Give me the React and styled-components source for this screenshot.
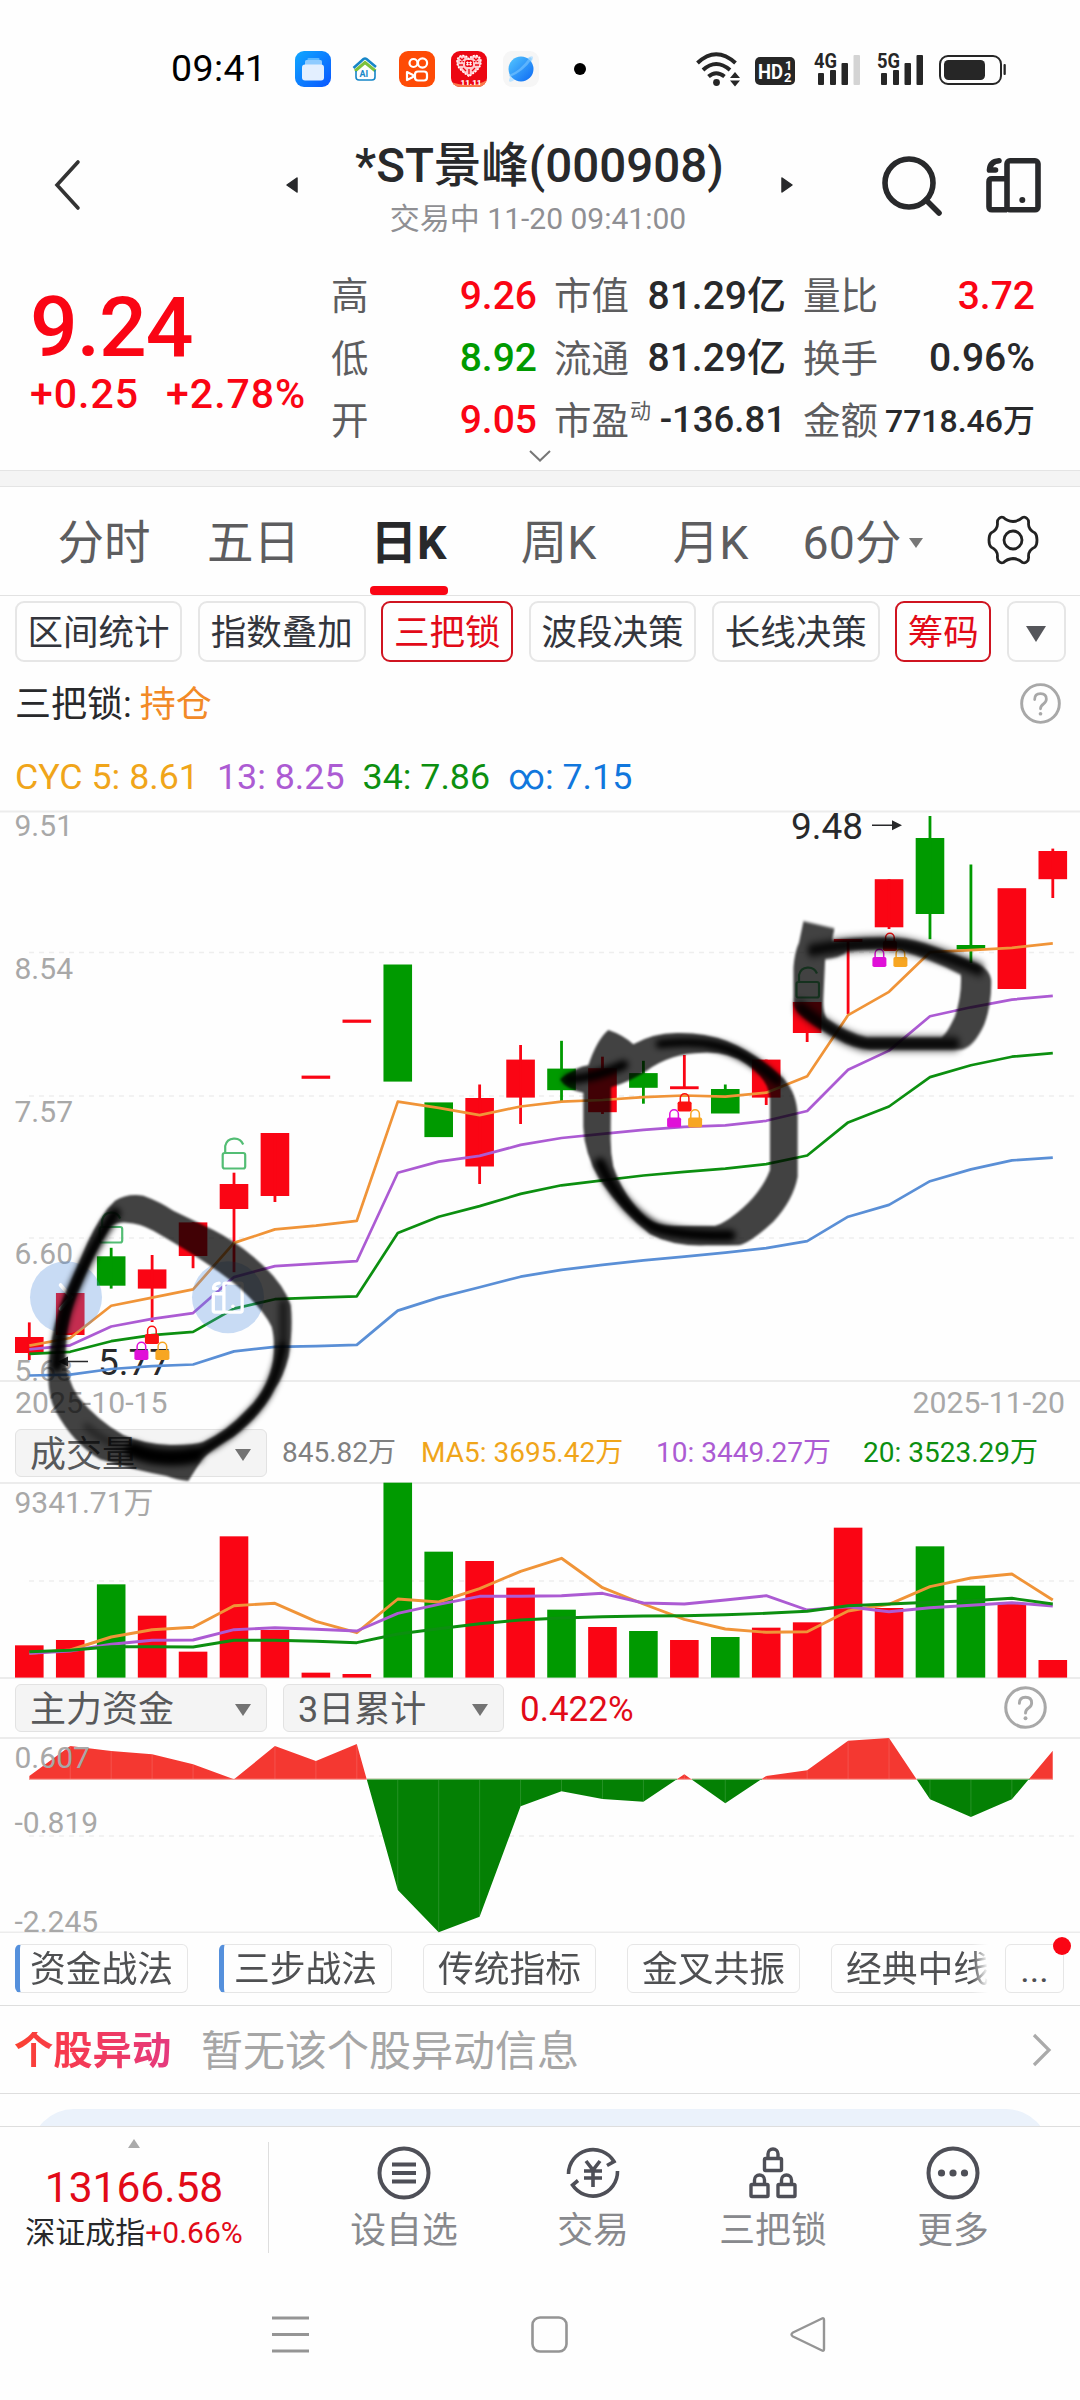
import React from "react";
import styled, { createGlobalStyle, css } from "styled-components";

const RED = "#fa0514";
const GREEN = "#009a00";

const GlobalStyle = createGlobalStyle`
  html, body { margin: 0; padding: 0; background: #fff; }
  * { box-sizing: border-box; }
`;

const Screen = styled.div`
  position: relative;
  width: 1080px;
  height: 2400px;
  overflow: hidden;
  display: flex;
  flex-direction: column;
  background: #fefefe;
  color: #28292b;
  font-family: Roboto, "Noto Sans CJK SC", sans-serif;
  font-size: 36px;
  line-height: 1;
  white-space: nowrap;
`;

/* ---------- status bar ---------- */
const StatusBar = styled.div`
  height: 138px;
  display: flex;
  align-items: center;
  padding: 0 74px 0 171px;
`;
const Clock = styled.div`
  width: 124px;
  font-size: 37.5px;
  letter-spacing: 0.4px;
  color: #000;
`;
const AppIcons = styled.div`
  display: flex;
  gap: 16px;
  align-items: center;
`;
const Dot = styled.div`
  width: 12px;
  height: 12px;
  border-radius: 6px;
  background: #000;
  margin-left: 19px;
`;
const Signals = styled.div`
  display: flex;
  align-items: center;
  margin-left: auto;
`;

/* ---------- header ---------- */
const Header = styled.header`
  height: 112px;
  display: flex;
  align-items: center;
  padding: 0 38px 18px 50px;
`;
const Titles = styled.div`
  display: flex;
  flex-direction: column;
  align-items: center;
  width: 481px;
  padding-top: 11px;
`;
const Title = styled.h1`
  margin: 0;
  font-size: 47.5px;
  font-weight: 500;
  line-height: 56px;
`;
const Subtitle = styled.div`
  font-size: 30px;
  color: #8f8f93;
  line-height: 50px;
  padding-right: 3px;
`;
const Spacer = styled.div`
  width: ${(p) => p.$w}px;
  flex: none;
`;

/* ---------- quote ---------- */
const Quote = styled.section`
  height: 220px;
  display: flex;
  padding: 16px 44px 0 30px;
`;
const PriceBlock = styled.div`
  width: 301px;
  color: ${RED};
  font-weight: 500;
`;
const Price = styled.div`
  font-size: 84px;
  line-height: 88px;
  padding-top: 18px;
  letter-spacing: -1px;
`;
const Change = styled.div`
  display: flex;
  gap: 27px;
  font-size: 41px;
  line-height: 44px;
  letter-spacing: 1px;
`;
const Stats = styled.div`
  display: grid;
  grid-template-columns: 206px 17px 232px 17px 232px;
  grid-template-rows: repeat(3, 62.3px);
`;
const Stat = styled.div`
  display: flex;
  align-items: center;
  justify-content: space-between;
  grid-column: ${(p) => p.$col};
`;
const StatLabel = styled.span`
  font-size: 37.5px;
  color: #5d5d5f;
  display: flex;
`;
const Sup = styled.span`
  font-size: 21px;
  line-height: 16px;
  margin-left: 1px;
`;
const StatValue = styled.span`
  font-size: ${(p) => p.$size || 39}px;
  font-weight: 500;
  padding-bottom: 2px;
  color: ${(p) => p.$color || "#28292b"};
`;
const ExpandRow = styled.div`
  height: 0;
  display: flex;
  justify-content: center;
  align-items: flex-end;
  svg { margin-bottom: 7px; }
`;
const Band = styled.div`
  height: 17px;
  background: #f4f4f4;
  border-top: 1px solid #e4e4e4;
  border-bottom: 1px solid #e4e4e4;
`;

/* ---------- tabs ---------- */
const Tabs = styled.nav`
  height: 109px;
  padding: 0 24px 0 28px;
  display: grid;
  grid-template-columns: 152px 147px 163px 137px 167px 138px 1fr;
  border-bottom: 1px solid #e2e2e2;
`;
const Tab = styled.div`
  display: flex;
  flex-direction: column;
  align-items: center;
  justify-content: space-between;
  font-size: 46.5px;
  font-weight: ${(p) => (p.$active ? 700 : 400)};
  color: ${(p) => (p.$active ? "#28292b" : "#5d5d5f")};
`;
const TabLabel = styled.div`
  display: flex;
  align-items: center;
  gap: 8px;
  height: 98px;
  padding-top: 14px;
`;
const TabMark = styled.div`
  width: 78px;
  height: 9px;
  border-radius: 4px;
  background: ${(p) => (p.$active ? RED : "transparent")};
`;
const Caret = styled.i`
  width: 0;
  height: 0;
  border-left: ${(p) => p.$w / 2}px solid transparent;
  border-right: ${(p) => p.$w / 2}px solid transparent;
  border-top: ${(p) => p.$h}px solid ${(p) => p.$color};
`;
const GearSlot = styled.div`
  display: flex;
  padding: 28px 0 0 55px;
`;

/* ---------- tool chips ---------- */
const ToolRow = styled.div`
  height: 66px;
  display: flex;
  align-items: flex-end;
  gap: 15.4px;
  padding: 0 14.5px;
`;
const ToolChip = styled.div`
  height: 61px;
  width: ${(p) => p.$w}px;
  display: flex;
  align-items: center;
  justify-content: center;
  padding-top: 4px;
  border-radius: 9px;
  border: ${(p) => (p.$on ? `2px solid #cf1420` : "2px solid #e6e6e6")};
  color: ${(p) => (p.$on ? "#e20a18" : "#33353c")};
  font-size: 35.5px;
`;
const InfoRow = styled.div`
  height: 84px;
  display: flex;
  align-items: center;
  padding: 2px 19px 0 15px;
  font-size: 36px;
`;
const Hold = styled.span`
  color: #f28a27;
  margin-left: 8px;
`;
const Legend = styled.div`
  height: 64px;
  display: flex;
  align-items: center;
  padding: 0 0 1px 15px;
  gap: ${(p) => p.$gap}px;
  font-size: 35.8px;
`;
const Tint = styled.span`
  color: ${(p) => p.$color};
`;
const Push = styled.div`
  margin-left: auto;
  margin-top: ${(p) => p.$up || 0}px;
  display: flex;
`;

/* ---------- charts ---------- */
const Chart = styled.svg`
  display: block;
  flex: none;
  width: 1080px;
  height: ${(p) => p.$h}px;
  font-family: Roboto, "Noto Sans CJK SC", sans-serif;
`;
const Dates = styled.div`
  height: 46px;
  display: flex;
  justify-content: space-between;
  align-items: center;
  padding: 0 15px 3px 15px;
  font-size: 30.2px;
  color: #a8a8a8;
`;
const PanelBar = styled.div`
  height: ${(p) => p.$h}px;
  display: flex;
  align-items: flex-start;
  padding: ${(p) => p.$top}px 33px 0 15px;
`;
const Select = styled.div`
  width: ${(p) => p.$w}px;
  height: 48px;
  margin-right: 16px;
  padding: 4px 15px 0 14px;
  display: flex;
  align-items: center;
  justify-content: space-between;
  background: #f4f4f4;
  border: 1px solid #e2e2e2;
  border-radius: 6px;
  font-size: 36px;
  color: #58595b;
`;
const Figures = styled.div`
  height: 48px;
  display: flex;
  align-items: center;
  margin-left: -1px;
  font-size: 28px;
  color: #808080;
`;
const Figure = styled.span`
  color: ${(p) => p.$color};
  width: ${(p) => p.$w}px;
`;
const FundValue = styled.div`
  height: 52px;
  line-height: 52px;
  font-size: 35px;
  color: #e20a18;
`;

/* ---------- strategy chips ---------- */
const StrategyRow = styled.div`
  height: 73px;
  display: flex;
  align-items: flex-start;
  padding: 11px 15px 0;
  border-bottom: 1px solid #dedede;
`;
const StrategyList = styled.div`
  display: flex;
  gap: 31px;
  width: 975px;
  margin-right: 15px;
  overflow: hidden;
  -webkit-mask-image: linear-gradient(90deg, #000 957px, transparent 973px);
  mask-image: linear-gradient(90deg, #000 957px, transparent 973px);
`;
const Strategy = styled.div`
  flex: none;
  width: ${(p) => p.$w || 173}px;
  height: 49px;
  display: flex;
  align-items: center;
  justify-content: center;
  padding-top: 5px;
  border: 1.5px solid #e6e6e6;
  border-radius: 6px;
  color: #4f5052;
  font-size: 35.8px;
  ${(p) => p.$mark && css`border-left: 5px solid #5590dc; padding-right: 4px;`}
`;
const More = styled(Strategy)`
  position: relative;
  &::after {
    content: "";
    position: absolute;
    right: -8px;
    top: -8px;
    width: 18px;
    height: 18px;
    border-radius: 9px;
    background: ${RED};
  }
`;

/* ---------- alerts ---------- */
const AlertRow = styled.div`
  height: 88px;
  display: flex;
  align-items: center;
  padding: 5px 27px 0 14px;
  border-bottom: 1px solid #dedede;
`;
const AlertTitle = styled.div`
  font-size: 39.3px;
  font-weight: 700;
  width: 187px;
  background: linear-gradient(90deg, #fb4230 0, #f73a4e 50px, #e53a7e 155px);
  -webkit-background-clip: text;
  background-clip: text;
  color: transparent;
`;
const AlertText = styled.div`
  font-size: 42px;
  color: #a6a6a6;
`;
const CardPeek = styled.div`
  height: 33px;
  padding: 15px 31px 0;
  overflow: hidden;
  border-bottom: 1px solid #dedede;
`;
const Card = styled.div`
  height: 90px;
  border-radius: 43px;
  background: #ebf2fb;
`;

/* ---------- bottom bar ---------- */
const BottomBar = styled.div`
  height: 148px;
  display: flex;
  align-items: flex-start;
`;
const IndexBox = styled.div`
  width: 269px;
  height: 111px;
  margin-top: 15px;
  border-right: 1px solid #dedede;
  display: flex;
  flex-direction: column;
  align-items: center;
`;
const UpMark = styled.i`
  width: 0;
  height: 0;
  margin-top: -3px;
  border-left: 6px solid transparent;
  border-right: 6px solid transparent;
  border-bottom: 9px solid #aaa;
`;
const IndexValue = styled.div`
  font-size: 42.5px;
  line-height: 50px;
  margin-top: 15px;
  color: #e20a18;
`;
const IndexName = styled.div`
  font-size: 30px;
  line-height: 40px;
`;
const Actions = styled.div`
  display: grid;
  grid-template-columns: 189px 180px 180px 180px;
  margin-left: 45px;
  padding-top: 19px;
`;
const Action = styled.div`
  display: flex;
  flex-direction: column;
  align-items: center;
  width: 180px;
  font-size: 35.8px;
  color: #88898d;
  gap: 14px;
`;
const SystemNav = styled.div`
  height: 124px;
  display: flex;
  gap: 222px;
  padding: 41px 0 0 272px;
`;

const Overlay = styled.svg`
  position: absolute;
  left: 0;
  top: 0;
  pointer-events: none;
`;

/* ---------- icons ---------- */
const FolderIcon = () => (
  <svg width="36" height="36" viewBox="0 0 36 36">
    <defs>
      <linearGradient id="fold" x1="0" y1="0" x2="1" y2="1">
        <stop offset="0" stopColor="#10a8ff" /><stop offset="1" stopColor="#0a56ff" />
      </linearGradient>
    </defs>
    <rect width="36" height="36" rx="9" fill="url(#fold)" />
    <rect x="12.5" y="7" width="12" height="5" rx="1" fill="#5cb8ff" />
    <rect x="10" y="9" width="17" height="6" rx="1.5" fill="#8fcbff" />
    <rect x="7" y="13.5" width="22" height="16" rx="3" fill="#e3efff" />
  </svg>
);
const HouseIcon = () => (
  <svg width="36" height="36" viewBox="0 0 36 36">
    <path d="M6.5 17 L16.5 8 Q18 7 19.5 8 L29 16" fill="none" stroke="#1686c8" strokeWidth="2.6" />
    <path d="M8 20 L18 11.5 L28.5 20" fill="none" stroke="#7cc13b" strokeWidth="3" />
    <path d="M9 20 V26 Q9 29 12 29 H25 Q28 29 28 26 V19" fill="none" stroke="#1686c8" strokeWidth="1.6" />
    <text x="12.5" y="25.5" fontSize="9" fontWeight="700" fill="#1686c8" fontFamily="Roboto, sans-serif">AI</text>
  </svg>
);
const VideoIcon = () => (
  <svg width="36" height="36" viewBox="0 0 36 36" fill="none" stroke="#fff" strokeWidth="2.2">
    <rect width="36" height="36" rx="9" fill="#fe4b06" stroke="none" />
    <circle cx="14.5" cy="12" r="4" />
    <circle cx="23.5" cy="12" r="4.6" />
    <rect x="16" y="20.500" width="12" height="9" rx="3" />
    <path d="M8 21 L14 24 V26 L8 29 Z" strokeLinejoin="round" />
  </svg>
);
const HeartIcon = () => (
  <svg width="36" height="36" viewBox="0 0 36 36">
    <defs><clipPath id="heartTile"><rect width="36" height="36" rx="9" /></clipPath></defs>
    <g clipPath="url(#heartTile)">
      <rect width="36" height="36" fill="#ec0713" />
      <path d="M0 31 Q8 34 18 34 Q28 34 36 29 V36 H0Z" fill="#fb7a4c" />
      <path d="M18 25.500 C10 20 5.500 16 6 10 C6.500 3.500 15 2.500 18 8 C21 2.500 29.500 3.500 30 10 C30.500 16 26 20 18 25.500Z" fill="#ffc9cd" stroke="#fff" strokeWidth="1.400" strokeDasharray="2 1.200" />
      <path d="M9 7l4 4m0-4l-4 4M23 7l4 4m0-4l-4 4M12 17l3 3m6 0l3-3M8 14h4M24 14h4M18 18v5" stroke="#ec0713" strokeWidth="1.300" />
      <rect x="14" y="9" width="8" height="7" rx="2" fill="#ec0713" />
      <path d="M16.500 10.500v4M19.500 10.500v4M15 11.700h6M15 13.700h6" stroke="#fff" strokeWidth=".9" />
      <text x="9.500" y="34" fontSize="8" fontWeight="900" fill="#fff" fontFamily="Roboto, sans-serif">11.11</text>
    </g>
  </svg>
);
const PlanetIcon = () => (
  <svg width="36" height="36" viewBox="0 0 36 36">
    <defs>
      <linearGradient id="plan" x1="0" y1="0" x2="1" y2="1">
        <stop offset="0" stopColor="#55c8ff" /><stop offset="1" stopColor="#0b68f4" />
      </linearGradient>
    </defs>
    <rect width="36" height="36" rx="9" fill="#f6f6f6" />
    <ellipse cx="18" cy="18" rx="17" ry="4" transform="rotate(-47 18 18)" fill="#bfe4ff" />
    <circle cx="18" cy="18" r="12.500" fill="url(#plan)" />
    <path d="M7 26 Q21 20 29 8 L27 6 Q17 20 6 24Z" fill="#7cc6ff" opacity=".6" />
  </svg>
);
const SignalCluster = () => (
  <svg width="312" height="36" viewBox="694 50 312 36" fontFamily="Roboto, sans-serif" fontWeight="700">
    <g fill="none" stroke="#262626" strokeWidth="4">
      <path d="M697.500 62 Q716 44.500 735.500 62" />
      <path d="M703 69 Q716 57 730 69" />
      <path d="M708.500 75.500 Q716 69 724.500 75.500" />
    </g>
    <circle cx="716.500" cy="81.500" r="3.400" fill="#262626" />
    <path d="M735 71l5 6h-10zM735 85.500l5-6h-10z" fill="#262626" />
    <rect x="755" y="56" width="40" height="28" rx="5" fill="#262626" />
    <text x="758" y="77.500" fontSize="21" fill="#fff" textLength="25" lengthAdjust="spacingAndGlyphs">HD</text>
    <text x="785" y="69" fontSize="12.500" fill="#fff">1</text>
    <text x="784" y="81" fontSize="13" fill="#fff">2</text>
    {[[814, "4G", true], [877, "5G", false]].map(([x, t, weak]) => (
      <g key={t} fill="#262626">
        <text x={x} y="67" fontSize="20" textLength="23" lengthAdjust="spacingAndGlyphs">{t}</text>
        <rect x={x + 4} y="72" width="6" height="12" rx="1" />
        <rect x={x + 16} y="69" width="6" height="15" rx="1" />
        <rect x={x + 27.500} y="62" width="6.500" height="22" rx="1" />
        <rect x={x + 39.500} y="54" width="6.500" height="30" rx="1" fill={weak ? "#d4d4d4" : "#262626"} />
      </g>
    ))}
    <rect x="940" y="55" width="61" height="28" rx="8" fill="none" stroke="#262626" strokeWidth="2" />
    <rect x="944" y="59" width="41" height="20" rx="4.500" fill="#262626" />
    <rect x="1003.500" y="63" width="2.300" height="11" rx="1" fill="#262626" />
  </svg>
);
const BackIcon = () => (
  <svg width="36" height="54" viewBox="0 0 36 54">
    <path d="M28 4 L7 27 L28 50" fill="none" stroke="#333" strokeWidth="3.600" strokeLinecap="round" />
  </svg>
);
const SideTriangle = ({ flip }) => (
  <svg width="14" height="18" viewBox="0 0 14 18">
    <path d="M12 2 L2 9 L12 16Z" fill="#28292b" stroke="#28292b" strokeWidth="1.500" strokeLinejoin="round" transform={flip ? "rotate(180 7 9)" : undefined} />
  </svg>
);
const SearchIcon = () => (
  <svg width="62" height="64" viewBox="880 152 62 64">
    <circle cx="909" cy="182" r="24" fill="none" stroke="#28292b" strokeWidth="5.600" />
    <path d="M926 199 L939 212" stroke="#28292b" strokeWidth="5.600" strokeLinecap="round" />
  </svg>
);
const PanelShape = ({ color }) => (
  <g fill="none" stroke={color} strokeWidth="5.600">
    <rect x="21" y="2.800" width="31" height="49" rx="3" />
    <path d="M21 20.800 H6 Q3 20.800 3 23.800 V48.800 Q3 51.800 6 51.800 H21" />
    <path d="M13 2.800 Q4 3.500 3.500 12 H9.500" strokeLinecap="round" strokeLinejoin="round" />
    <circle cx="36.300" cy="42" r="3" fill={color} stroke="none" />
  </g>
);
const PanelIcon = () => (
  <svg width="56" height="55" viewBox="0 0 56 55"><PanelShape color="#28292b" /></svg>
);
const ChevronDown = () => (
  <svg width="24" height="14" viewBox="0 0 24 14">
    <path d="M2 2 L12 11.500 L22 2" fill="none" stroke="#777" strokeWidth="2" />
  </svg>
);
const GearIcon = () => (
  <svg width="52" height="50" viewBox="-26 -25 52 50" fill="none" stroke="#222" strokeWidth="2.800" strokeLinejoin="round">
    <path d="M-14 -21.500 Q-12 -23.500 -9.500 -22.500 Q-6 -19 0 -18.500 Q6 -19 9.500 -22.500 Q12 -23.500 14 -21.500 Q16 -20 15.500 -16 Q15.500 -10 22 -7 Q24 -5 24 0 Q24 5 22 7 Q15.500 10 15.500 16 Q16 20 14 21.500 Q12 23.500 9.500 22.500 Q6 19 0 18.500 Q-6 19 -9.500 22.500 Q-12 23.500 -14 21.500 Q-16 20 -15.500 16 Q-15.500 10 -22 7 Q-24 5 -24 0 Q-24 -5 -22 -7 Q-15.500 -10 -15.500 -16 Q-16 -20 -14 -21.500Z" />
    <circle r="9" />
  </svg>
);
const HelpIcon = ({ size = 42 }) => (
  <svg width={size} height={size} viewBox="0 0 42 42">
    <circle cx="21" cy="21" r="19.300" fill="none" stroke="#a8a8a8" strokeWidth="3" />
    <path d="M15 17 Q15 11 21 11 Q27 11 27 16.500 Q27 19.500 24 21.500 Q21 23.500 21 26.500" fill="none" stroke="#a8a8a8" strokeWidth="2.800" strokeLinecap="round" />
    <circle cx="21" cy="31.500" r="1.900" fill="#a8a8a8" />
  </svg>
);
const ChevronRight = () => (
  <svg width="22" height="36" viewBox="0 0 22 36">
    <path d="M3 3 L18 18 L3 33" fill="none" stroke="#aaa" strokeWidth="3.200" />
  </svg>
);
const ListIcon = () => (
  <svg width="54" height="54" viewBox="0 0 54 54" fill="none" stroke="#4e4f57" strokeWidth="4">
    <circle cx="27" cy="27" r="24.500" />
    <path d="M15 18.500 H39 M15 27 H39 M15 35.500 H39" />
  </svg>
);
const TradeIcon = () => (
  <svg width="54" height="54" viewBox="0 0 54 54" fill="none" stroke="#4e4f57" strokeWidth="3.600">
    <path d="M2.500 28 A24.500 24.500 0 0 1 48 15.500 L41 19.500" />
    <path d="M51.500 25 A24.500 24.500 0 0 1 6.500 39 L12 34.500" />
    <path d="M20 15 L27 24 L34 15 M27 24 V41 M18 25 H36 M18 32 H36" />
  </svg>
);
const LocksIcon = () => (
  <svg width="54" height="54" viewBox="0 0 54 54" fill="none" stroke="#4e4f57" strokeWidth="3.400">
    {[[27, 3], [13.500, 29], [40.500, 29]].map(([x, y]) => (
      <g key={x}>
        <rect x={x - 8.500} y={y + 9.500} width="17" height="12" rx="1" />
        <path d={`M${x - 5} ${y + 9.500} V${y + 5} A5 5 0 0 1 ${x + 5} ${y + 5} V${y + 9.500}`} />
      </g>
    ))}
  </svg>
);
const MoreIcon = () => (
  <svg width="54" height="54" viewBox="0 0 54 54">
    <circle cx="27" cy="27" r="24.500" fill="none" stroke="#4e4f57" strokeWidth="4" />
    <g fill="#4e4f57"><circle cx="15.500" cy="27" r="3.600" /><circle cx="27" cy="27" r="3.600" /><circle cx="38.500" cy="27" r="3.600" /></g>
  </svg>
);
const MenuNavIcon = () => (
  <svg width="37" height="37" viewBox="0 0 37 37"><path d="M0 2 H37 M0 18.500 H37 M0 35 H37" stroke="#959595" strokeWidth="3" /></svg>
);
const HomeNavIcon = () => (
  <svg width="37" height="37" viewBox="0 0 37 37"><rect x="1.500" y="1.500" width="34" height="34" rx="7.500" fill="none" stroke="#959595" strokeWidth="2.600" /></svg>
);
const BackNavIcon = () => (
  <svg width="37" height="37" viewBox="0 0 37 37"><path d="M32 2.500 Q34 1.500 34 4 V33 Q34 35.500 32 34.500 L3 20.500 Q0 18.500 3 16.500Z" fill="none" stroke="#959595" strokeWidth="2.400" strokeLinejoin="round" /></svg>
);

/* ---------- chart data ---------- */
const cx = (i) => 29.3 + 40.94 * i;
const BW = 28.6;

// colour, body top, body bottom, high, low
const candles = [
  ["r", 1337, 1353, 1322.4, 1360], ["r", 1293, 1335], ["g", 1256.3, 1285.7, 1247.8, 1288.6],
  ["r", 1269.4, 1288.6, 1255, 1322], ["r", 1222.4, 1256, 1222.4, 1268.2], ["r", 1184, 1209, 1172.7, 1272.2],
  ["r", 1133, 1196, 1133, 1202], ["r", 1075.6, 1078.8], ["r", 1019.6, 1022.8], ["g", 964.5, 1081.6],
  ["g", 1102.4, 1137.1], ["r", 1098, 1166.5, 1084.5, 1184], ["r", 1059.6, 1097.6, 1045, 1124],
  ["g", 1068.6, 1090.2, 1040.8, 1101.2], ["r", 1068.2, 1112.2, 1056.7, 1114], ["g", 1073.1, 1087.8, 1060.8, 1103.7],
  ["r", 1086.3, 1089.2, 1055, 1089], ["g", 1089, 1113.5, 1084.5, 1113], ["r", 1059.6, 1097.6, 1059.6, 1105],
  ["r", 1002, 1033, 1002, 1042], ["r", 939, 942, 940, 1014], ["r", 879.2, 927.3, 879.2, 929],
  ["g", 838, 914, 816, 939.2], ["g", 945, 949.4, 864.5, 963], ["r", 888.2, 989], ["r", 851, 879.2, 848.6, 898],
];
const priceLines = [
  ["#f09438", [1337, 1318, 1239, 1219, 1199, 1085, 1052, 1043, 1031, 739, 754, 772, 751, 739, 735, 728, 724, 727, 717, 677, 527, 470, 373, 368, 362, 351]],
  ["#ac5bd3", [1346, 1336, 1290, 1271, 1257, 1169, 1142, 1136, 1130, 913, 886, 872, 845, 828, 818, 808, 801, 797, 786, 762, 661, 614, 530, 508, 489, 480]],
  ["#0c8f10", [1357, 1352, 1326, 1311, 1303, 1246, 1223, 1219, 1216, 1061, 1021, 995, 965, 944, 932, 920, 911, 903, 892, 871, 790, 751, 679, 650, 629, 620]],
  ["#5a8fd6", [1410, 1408, 1394, 1387, 1383, 1351, 1340, 1338, 1335, 1251, 1219, 1194, 1168, 1151, 1139, 1128, 1119, 1109, 1098, 1081, 1021, 992, 934, 905, 883, 876]],
];
const volumes = [
  ["r", 676], ["r", 660], ["g", 493], ["r", 587], ["r", 695], ["r", 349], ["r", 630], ["r", 758], ["r", 762],
  ["g", 188], ["g", 395], ["r", 423], ["r", 503], ["g", 569], ["r", 621], ["g", 633], ["r", 660], ["g", 651],
  ["r", 623], ["r", 607], ["r", 323], ["r", 564], ["g", 379], ["g", 497], ["r", 549], ["r", 720],
];
const volumeLines = [
  ["#f09438", [700, 690, 651, 629, 622, 557, 550, 604, 638, 537, 546, 506, 454, 415, 503, 552, 598, 627, 637, 635, 573, 553, 500, 474, 462, 540]],
  ["#ac5bd3", [700, 693, 673, 661, 660, 629, 623, 628, 633, 580, 553, 529, 529, 527, 520, 549, 552, 540, 527, 570, 560, 575, 563, 556, 548, 558]],
  ["#0c8f10", [695, 691, 680, 680, 681, 661, 661, 664, 668, 642, 626, 611, 600, 594, 590, 588, 587, 584, 580, 574, 557, 552, 547, 542, 535, 552]],
];
const funds = [228, 138, 153, 163, 193, 238, 138, 183, 132, 570, 697, 650, 319, 274, 297, 305, 223, 310, 228, 211, 122, 114, 298, 351, 298, 152];

const fill = (c) => (c === "r" ? RED : GREEN);
const poly = (ys, fn) => ys.map((v, i) => `${cx(i).toFixed(1)},${fn(v).toFixed(1)}`).join(" ");

const Padlock = ({ x, y, color }) => (
  <g>
    <rect x={x - 7} y={y + 8.500} width="14" height="10" rx="1.800" fill={color} />
    <path d={`M${x - 4.300} ${y + 9} V${y + 5} A4.300 4.300 0 0 1 ${x + 4.300} ${y + 5} V${y + 9}`} fill="none" stroke={color} strokeWidth="1.500" />
  </g>
);
const OpenLock = ({ x, y }) => (
  <g fill="none" stroke="#53bd74" strokeWidth="2.200">
    <rect x={x - 11} y={y + 17} width="22.500" height="15.500" rx="2" />
    <path d={`M${x - 8.500} ${y + 17} V${y + 10} A9.500 9.500 0 0 1 ${x + 9.500} ${y + 8.500}`} />
  </g>
);

const PriceChart = () => (
  <Chart $h={572} viewBox="0 810 1080 572">
    <path d="M0 811.500 H1080 M0 1381 H1080" stroke="#ececec" strokeWidth="2" />
    <path d="M29 952.500 H1075 M29 1096 H1075 M29 1238 H1075" stroke="#eeeeee" strokeWidth="1.600" strokeDasharray="5 5" />
    <g fontSize="30" fill="#a8a8a8">
      <text x="14.500" y="835.500">9.51</text><text x="14.500" y="979">8.54</text>
      <text x="14.500" y="1121.500">7.57</text><text x="14.500" y="1264">6.60</text>
      <text x="14.500" y="1381">5.63</text>
    </g>
    <g fontSize="37" fill="#28292b">
      <text x="791" y="839">9.48</text><text x="98" y="1375">5.77</text>
    </g>
    <path d="M872 825.300 H896 M88 1361.600 H64" stroke="#28292b" strokeWidth="1.500" />
    <path d="M902 825.300 l-10 -5 v10z M58 1361.600 l10 -5 v10z" fill="#28292b" />
    {candles.map(([c, t, b, h, l], i) => (
      <g key={i} fill={fill(c)}>
        <rect x={cx(i) - BW / 2} y={t} width={BW} height={b - t} />
        {h && <rect x={cx(i) - 1.400} y={h} width="2.800" height={l - h} />}
      </g>
    ))}
    {priceLines.map(([c, ys]) => (
      <polyline key={c} points={poly(ys, (v) => 800 + v / 2.45)} fill="none" stroke={c} strokeWidth="2.700" strokeLinejoin="round" />
    ))}
    <OpenLock x={110.700} y={1210} /><OpenLock x={233.700} y={1136} /><OpenLock x={807.500} y={965} />
    {[[151.900, 1325.500], [684.600, 1093], [889.900, 932.500]].map(([x, y]) => (
      <g key={x}>
        <Padlock x={x} y={y} color="#fb1010" />
        <Padlock x={x - 10.500} y={y + 16} color="#e010d8" />
        <Padlock x={x + 10.500} y={y + 16} color="#f7a622" />
      </g>
    ))}
  </Chart>
);

const VolumeChart = () => (
  <Chart $h={197} viewBox="0 1482 1080 197">
    <path d="M0 1483 H1080 M0 1678 H1080" stroke="#ececec" strokeWidth="2" />
    <path d="M29 1581 H1075" stroke="#eeeeee" strokeWidth="1.600" strokeDasharray="5 5" />
    <text x="14.500" y="1513" fontSize="30" fill="#a8a8a8">9341.71万</text>
    {volumes.map(([c, t], i) => {
      const y = 1420 + t / 3;
      return <rect key={i} x={cx(i) - BW / 2} y={y} width={BW} height={1677.600 - y} fill={fill(c)} />;
    })}
    {volumeLines.map(([c, ys]) => (
      <polyline key={c} points={poly(ys, (v) => 1420 + v / 3)} fill="none" stroke={c} strokeWidth="2.900" strokeLinejoin="round" />
    ))}
  </Chart>
);

const FundChart = () => {
  const zero = 1779.4;
  const pts = `${cx(0)},${zero} ${poly(funds, (v) => 1700 + v / 3)} ${cx(25)},${zero}`;
  return (
    <Chart $h={196} viewBox="0 1737 1080 196">
      <defs>
        <clipPath id="above"><rect x="0" y="1737" width="1080" height={zero - 1737} /></clipPath>
        <clipPath id="below"><rect x="0" y={zero} width="1080" height="160" /></clipPath>
      </defs>
      <path d="M0 1738 H1080 M0 1932.300 H1080" stroke="#ececec" strokeWidth="1.800" />
      <path d="M29 1836 H1075" stroke="#eeeeee" strokeWidth="1.600" strokeDasharray="5 5" />
      <polygon points={pts} fill="#f43831" clipPath="url(#above)" />
      <polygon points={pts} fill="#048004" clipPath="url(#below)" />
      <g stroke="#fff" strokeOpacity=".2" strokeWidth=".7">
        {funds.map((v, i) => <path key={i} d={`M${cx(i)} ${zero} V${1700 + v / 3}`} />)}
      </g>
      <path d={`M29 ${zero} H1053`} stroke="#f5a39f" strokeWidth="1.200" />
      <path d={`M367 ${zero} H677 M692 ${zero} H762 M917 ${zero} H1030`} stroke="#66b266" strokeWidth="1.200" />
      <g fontSize="30" fill="#a8a8a8">
        <text x="14.500" y="1768">0.607</text>
        <text x="14.500" y="1833">-0.819</text>
        <text x="14.500" y="1932">-2.245</text>
      </g>
    </Chart>
  );
};

/* Floating buttons and freehand marker loops lying over the whole page */
const MarkerLayer = () => (
  <Overlay width="1080" height="2400" viewBox="0 0 1080 2400">
    <defs>
      <filter id="soft" x="-10%" y="-10%" width="120%" height="120%"><feGaussianBlur stdDeviation="3.500" /></filter>
      <filter id="softer" x="-30%" y="-60%" width="160%" height="220%"><feGaussianBlur stdDeviation="10" /></filter>
    </defs>
    <g fill="rgba(75,138,222,.3)">
      <circle cx="66" cy="1297.300" r="36" /><circle cx="228" cy="1297.300" r="36" />
    </g>
    <path d="M60.500 1285 L71 1297 L60.500 1309" fill="none" stroke="#fff" strokeWidth="3.600" strokeLinecap="round" />
    <g transform="translate(211.500 1281.500) scale(.59)"><PanelShape color="#fff" /></g>

    <g transform="translate(0 1160) scale(.3333)">
      <path fillRule="evenodd" filter="url(#soft)" fill="rgba(0,0,0,.74)"
        d="M345 122 Q380 100 430 107 Q480 125 520 152 L640 210 Q700 240 760 290 Q850 365 872 435 Q880 500 866 590 Q850 650 825 685 Q790 760 700 830 Q630 870 605 900 L565 963 Q530 960 500 948 Q400 930 300 898 Q220 850 168 755 Q142 710 145 620 Q150 540 180 440 L262 250 Q300 165 345 122Z
           M330 200 Q290 260 240 380 Q195 480 196 590 Q200 660 235 710 Q290 780 370 825 Q430 852 510 855 Q580 856 610 846 Q680 815 740 750 Q805 690 820 600 Q826 540 815 500 Q790 450 720 385 Q640 315 460 212 Q420 190 380 188 Q345 186 330 200Z" />
      <g fill="none" stroke="#000" filter="url(#softer)" strokeLinecap="round">
        <path d="M345 160 Q270 270 215 400 Q175 500 170 620" strokeWidth="34" />
        <path d="M846 560 Q830 680 755 760 Q690 830 600 875" strokeWidth="28" />
        <path d="M400 870 Q480 905 585 885" strokeWidth="50" />
        <path d="M850 430 V570" strokeWidth="26" strokeOpacity=".6" />
        <path d="M260 800 Q330 860 420 880" strokeWidth="22" strokeOpacity=".4" />
      </g>
    </g>

    <g transform="translate(560 1000) scale(.3333)">
      <path fillRule="evenodd" filter="url(#soft)" fill="rgba(0,0,0,.74)"
        d="M145 90 Q190 105 220 133 Q280 99 350 99 Q430 97 500 123 Q590 160 670 235 Q712 280 713 350 V530 Q700 600 640 665 Q570 730 535 736 H440 Q340 740 270 702 Q190 640 120 540 Q72 460 70 380 V278 Q20 270 0 238 Q50 200 85 196 Q110 120 145 90Z
           M153 262 Q220 240 260 212 Q330 160 430 158 Q510 155 560 192 Q630 240 630 300 V510 Q600 590 510 655 Q480 675 465 678 H350 Q290 680 260 655 Q190 590 160 500 Q150 450 152 400Z" />
      <g fill="none" stroke="#000" filter="url(#softer)" strokeLinecap="round">
        <path d="M25 238 Q100 235 190 195" strokeWidth="30" />
        <path d="M300 132 Q450 115 540 160 Q600 190 655 245" strokeWidth="26" />
        <path d="M450 135 Q540 150 640 235" strokeWidth="24" />
        <path d="M120 490 Q180 620 280 680 Q350 708 510 706" strokeWidth="34" />
      </g>
    </g>

    <g transform="translate(540 800) scale(.3444 .4082)">
      <path fillRule="evenodd" filter="url(#soft)" fill="rgba(0,0,0,.74)"
        d="M765 297 L855 315 L848 345 Q900 337 1000 337 Q1060 336 1120 352 Q1200 375 1270 402 Q1305 415 1310 440 Q1312 500 1290 550 Q1260 605 1225 611 H960 Q900 605 870 588 Q740 530 736 500 V410 Q740 370 752 350Z
           M828 390 Q870 388 895 370 Q950 365 1040 367 Q1130 388 1222 428 Q1225 480 1205 530 Q1180 575 1165 582 H950 Q890 570 832 535 Q820 520 823 480Z" />
      <g fill="none" stroke="#000" filter="url(#softer)" strokeLinecap="round">
        <path d="M790 368 Q900 350 1000 351 Q1080 350 1275 415" strokeWidth="28" />
        <path d="M755 508 Q860 580 940 597 H1205" strokeWidth="28" />
      </g>
    </g>
  </Overlay>
);

const stats = [
  ["高", "9.26", RED], ["市值", "81.29亿"], ["量比", "3.72", RED],
  ["低", "8.92", GREEN], ["流通", "81.29亿"], ["换手", "0.96%"],
  ["开", "9.05", RED], ["市盈", "-136.81", null, 36.5, "动"], ["金额", "7718.46万", null, 32],
];
const tabs = ["分时", "五日", "日K", "周K", "月K", "60分"];
const tools = [["区间统计", 168], ["指数叠加", 168], ["三把锁", 132, true], ["波段决策", 168], ["长线决策", 168], ["筹码", 96, true]];
const actions = [["设自选", ListIcon], ["交易", TradeIcon], ["三把锁", LocksIcon], ["更多", MoreIcon]];

export default function App() {
  return (
    <Screen>
      <GlobalStyle />
      <StatusBar>
        <Clock>09:41</Clock>
        <AppIcons>
          <FolderIcon /><HouseIcon /><VideoIcon /><HeartIcon /><PlanetIcon />
          <Dot />
        </AppIcons>
        <Signals><SignalCluster /></Signals>
      </StatusBar>

      <Header>
        <BackIcon />
        <Spacer $w={199} />
        <SideTriangle />
        <Titles>
          <Title>*ST景峰(000908)</Title>
          <Subtitle>交易中 11-20 09:41:00</Subtitle>
        </Titles>
        <SideTriangle flip />
        <Spacer $w={86} />
        <SearchIcon />
        <Spacer $w={44} />
        <PanelIcon />
      </Header>

      <Quote>
        <PriceBlock>
          <Price>9.24</Price>
          <Change><span>+0.25</span><span>+2.78%</span></Change>
        </PriceBlock>
        <Stats>
          {stats.map(([label, value, color, size, sup], i) => (
            <Stat key={label} $col={(i % 3) * 2 + 1}>
              <StatLabel>{label}{sup && <Sup>{sup}</Sup>}</StatLabel>
              <StatValue $color={color} $size={size}>{value}</StatValue>
            </Stat>
          ))}
        </Stats>
      </Quote>
      <ExpandRow><ChevronDown /></ExpandRow>
      <Band />

      <Tabs>
        {tabs.map((t, i) => (
          <Tab key={t} $active={i === 2}>
            <TabLabel>{t}{i === 5 && <Caret $w={14} $h={10} $color="#777" />}</TabLabel>
            <TabMark $active={i === 2} />
          </Tab>
        ))}
        <GearSlot><GearIcon /></GearSlot>
      </Tabs>

      <ToolRow>
        {tools.map(([t, w, on]) => <ToolChip key={t} $w={w} $on={on}>{t}</ToolChip>)}
        <ToolChip $w={59}><Caret $w={20} $h={16} $color="#55565b" /></ToolChip>
      </ToolRow>
      <InfoRow>
        三把锁:<Hold>持仓</Hold>
        <Push $up={-4}><HelpIcon size={41} /></Push>
      </InfoRow>
      <Legend $gap={18}>
        <Tint $color="#f0a51a">CYC 5: 8.61</Tint>
        <Tint $color="#ac5bd3">13: 8.25</Tint>
        <Tint $color="#0c8f10">34: 7.86</Tint>
        <Tint $color="#1177dd">∞: 7.15</Tint>
      </Legend>

      <PriceChart />
      <Dates><span>2025-10-15</span><span>2025-11-20</span></Dates>

      <PanelBar $h={54} $top={1}>
        <Select $w={252}>成交量<Caret $w={17} $h={12} $color="#737373" /></Select>
        <Figures>
          <Figure $w={139}>845.82万</Figure>
          <Figure $w={235} $color="#f0a51a">MA5: 3695.42万</Figure>
          <Figure $w={207} $color="#ac5bd3">10: 3449.27万</Figure>
          <Figure $w={180} $color="#0c8f10">20: 3523.29万</Figure>
        </Figures>
      </PanelBar>
      <VolumeChart />

      <PanelBar $h={58} $top={5}>
        <Select $w={252}>主力资金<Caret $w={17} $h={12} $color="#737373" /></Select>
        <Select $w={221}>3日累计<Caret $w={17} $h={12} $color="#737373" /></Select>
        <FundValue>0.422%</FundValue>
        <Push $up={2}><HelpIcon size={43} /></Push>
      </PanelBar>
      <FundChart />

      <StrategyRow>
        <StrategyList>
          <Strategy $mark>资金战法</Strategy>
          <Strategy $mark>三步战法</Strategy>
          <Strategy>传统指标</Strategy>
          <Strategy>金叉共振</Strategy>
          <Strategy>经典中线</Strategy>
        </StrategyList>
        <More $w={59}>...</More>
      </StrategyRow>

      <AlertRow>
        <AlertTitle>个股异动</AlertTitle>
        <AlertText>暂无该个股异动信息</AlertText>
        <Push $up={-4}><ChevronRight /></Push>
      </AlertRow>
      <CardPeek><Card /></CardPeek>

      <BottomBar>
        <IndexBox>
          <UpMark />
          <IndexValue>13166.58</IndexValue>
          <IndexName>深证成指<Tint $color="#e20a18">+0.66%</Tint></IndexName>
        </IndexBox>
        <Actions>
          {actions.map(([t, Icon]) => <Action key={t}><Icon />{t}</Action>)}
        </Actions>
      </BottomBar>
      <SystemNav><MenuNavIcon /><HomeNavIcon /><BackNavIcon /></SystemNav>
      <MarkerLayer />
    </Screen>
  );
}
